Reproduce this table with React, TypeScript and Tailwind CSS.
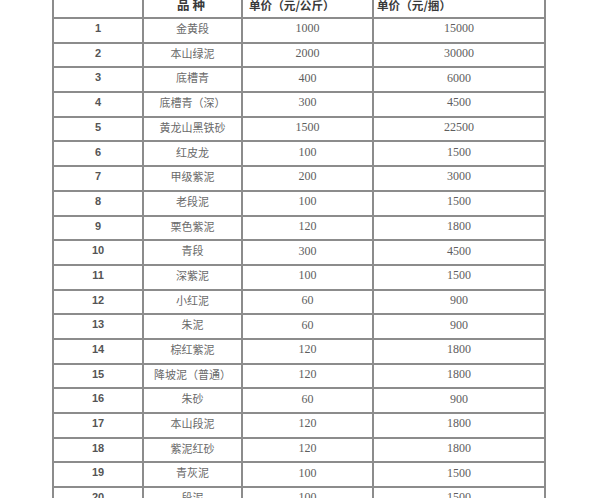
import React from "react";

const rows: [string, string, string, string][] = [
  ["1", "金黄段", "1000", "15000"],
  ["2", "本山绿泥", "2000", "30000"],
  ["3", "底槽青", "400", "6000"],
  ["4", "底槽青（深）", "300", "4500"],
  ["5", "黄龙山黑铁砂", "1500", "22500"],
  ["6", "红皮龙", "100", "1500"],
  ["7", "甲级紫泥", "200", "3000"],
  ["8", "老段泥", "100", "1500"],
  ["9", "栗色紫泥", "120", "1800"],
  ["10", "青段", "300", "4500"],
  ["11", "深紫泥", "100", "1500"],
  ["12", "小红泥", "60", "900"],
  ["13", "朱泥", "60", "900"],
  ["14", "棕红紫泥", "120", "1800"],
  ["15", "降坡泥（普通）", "120", "1800"],
  ["16", "朱砂", "60", "900"],
  ["17", "本山段泥", "120", "1800"],
  ["18", "紫泥红砂", "120", "1800"],
  ["19", "青灰泥", "100", "1500"],
  ["20", "段泥", "100", "1500"],
];

const cjk = "font-['Noto_Sans_CJK_SC',sans-serif]";

export default function App() {
  return (
    <div className="w-[600px] h-[498px] overflow-hidden bg-white">
      <div className="ml-[52px] -mt-[7.7px] w-[494px] grid grid-cols-[88px_97px_129px_170px] auto-rows-[22.7px] gap-[2px] p-[2px] bg-[#8c8c8c]">
        <div className="bg-white" />
        <div className={`bg-white flex items-center justify-center pt-[0px] text-[12.5px] font-bold text-[#3a3a3a] tracking-[3px] ${cjk}`}>
          品种
        </div>
        <div className={`bg-white flex items-center pl-[6px] text-[11.6px] font-bold text-[#3a3a3a] whitespace-nowrap ${cjk}`}>
          单价（元/公斤）
        </div>
        <div className={`bg-white flex items-center pl-[3px] text-[11.6px] font-bold text-[#3a3a3a] whitespace-nowrap ${cjk}`}>
          单价（元/捆）
        </div>
        {rows.map(([n, name, kg, bale]) => (
          <React.Fragment key={n}>
            <div className="bg-white flex items-center justify-center pb-[4px] text-[11px] font-semibold text-[#555] font-['Liberation_Sans',sans-serif]">
              {n}
            </div>
            <div className={`bg-white flex items-center justify-center pb-[4px] text-[11px] text-[#6a6a6a] whitespace-nowrap ${cjk}`}>
              {name}
            </div>
            <div className="bg-white flex items-center justify-center pb-[4px] text-[12px] text-[#5e5e5e] font-['Liberation_Serif',serif]">
              {kg}
            </div>
            <div className="bg-white flex items-center justify-center pb-[4px] text-[12px] text-[#5e5e5e] font-['Liberation_Serif',serif]">
              {bale}
            </div>
          </React.Fragment>
        ))}
      </div>
    </div>
  );
}
